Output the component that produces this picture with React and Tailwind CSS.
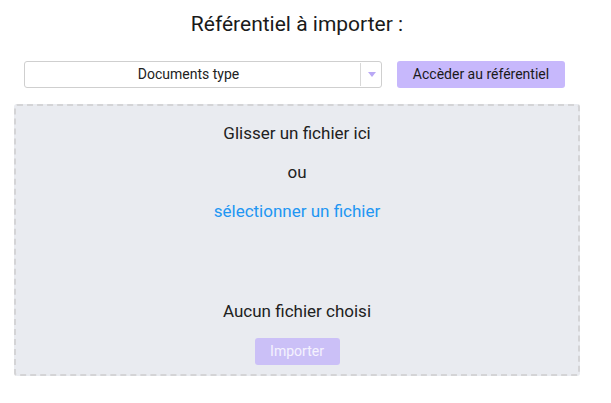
export default function App() {
  return (
    <div className="w-[611px] h-[403px] bg-white text-[#212121]" style={{ fontFamily: "Roboto, 'Liberation Sans', sans-serif" }}>
      <div className="pl-[14px] w-[580px]">
        <div className="pt-[12px] h-[61px] text-center text-[21px] leading-[24px] text-[#1a1a1a]">Référentiel à importer :</div>
        <div className="flex items-center pl-[10px] h-[27px]">
          <div className="w-[358px] h-[27px] flex border border-[#cfcfcf] rounded-[3px] bg-white">
            <div className="flex-1 flex items-center justify-center pr-[8px] text-[14px] text-[#222]">Documents type</div>
            <div className="w-[21px] border-l border-[#d8d8d8] flex items-center justify-center my-[1px]">
              <svg width="8" height="5" viewBox="0 0 8 5" className="ml-[2px]"><path d="M0 0 L8 0 L4 5 Z" fill="#b9a8f5" /></svg>
            </div>
          </div>
          <button className="ml-[15px] w-[168px] h-[27px] rounded-[3px] bg-[#c7b8fc] text-[14px] text-[#1a1a1a] flex items-center justify-center">Accèder au référentiel</button>
        </div>
        <div className="mt-[16px] w-[566px] h-[272px] border-2 border-dashed border-[#d4d4d6] rounded-[3px] bg-[#e9ebf0] flex flex-col items-center">
          <div className="mt-[15px] text-[17px] leading-[24px]">Glisser un fichier ici</div>
          <div className="mt-[15px] text-[17px] leading-[24px]">ou</div>
          <div className="mt-[15px] text-[17px] leading-[24px] text-[#2196f3]">sélectionner un fichier</div>
          <div className="mt-[76px] text-[17px] leading-[24px]">Aucun fichier choisi</div>
          <button className="mt-[15px] w-[85px] h-[27px] rounded-[3px] bg-[#cbc0f7] text-[14px] text-white/80 flex items-center justify-center">Importer</button>
        </div>
      </div>
    </div>
  );
}
